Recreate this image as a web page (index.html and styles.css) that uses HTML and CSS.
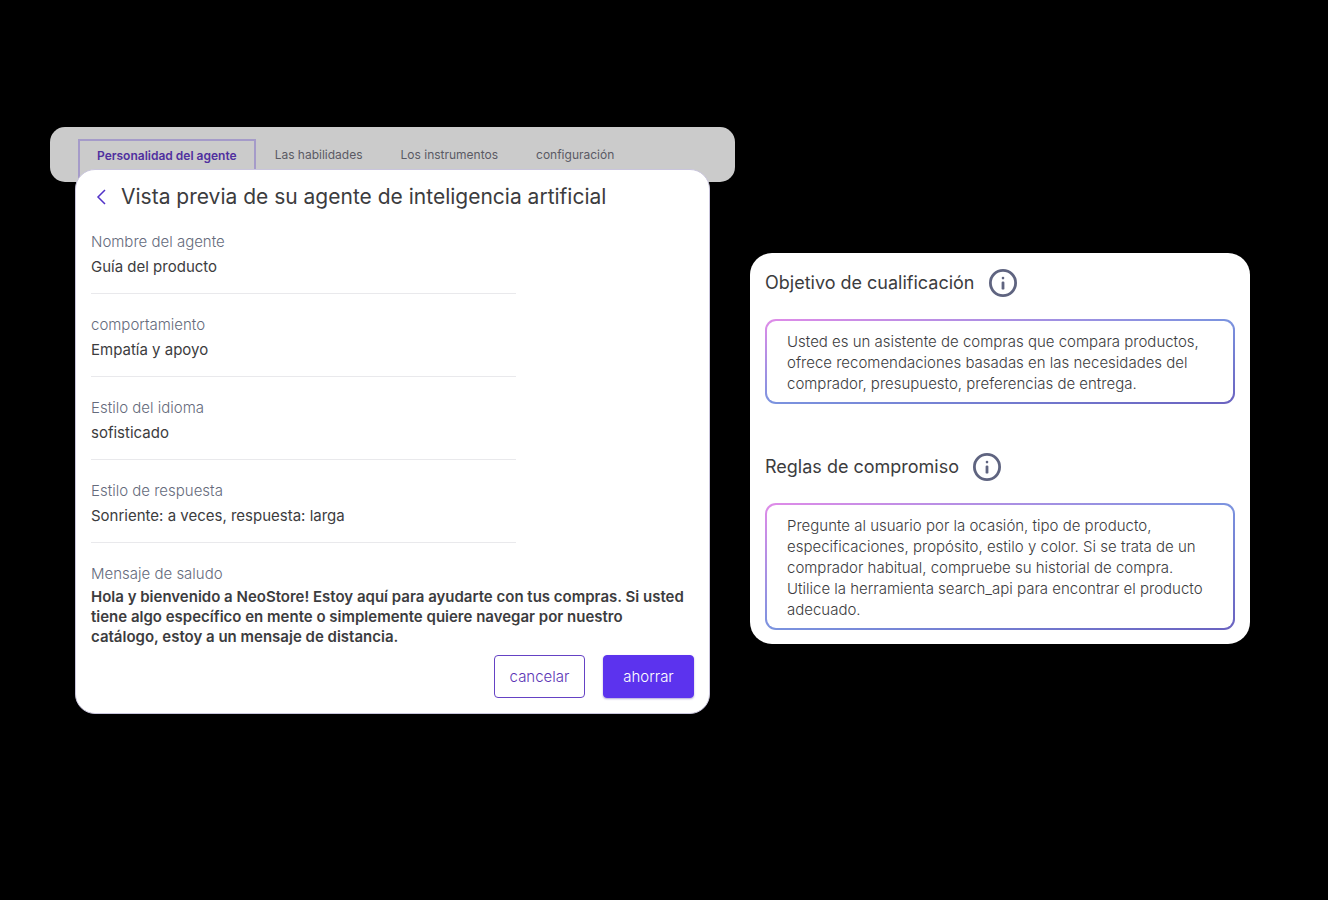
FILE: index.html
```
<!DOCTYPE html>
<html lang="es">
<head>
    <meta charset="UTF-8">
    <meta name="viewport" content="width=device-width, initial-scale=1.0">
    <title>Vista previa del agente</title>
    <link rel="stylesheet" href="styles.css">
</head>
<body>

    <main class="page">
        <section class="editor">
            <nav class="tabs">
                <a class="tab active" href="#personalidad">Personalidad del agente</a>
                <a class="tab" href="#habilidades">Las habilidades</a>
                <a class="tab" href="#instrumentos">Los instrumentos</a>
                <a class="tab" href="#configuracion">configuración</a>
            </nav>

            <div class="preview">
                <header class="preview-header">
                    <button class="back" aria-label="Volver">
                        <svg width="10" height="16" viewBox="0 0 10 16" fill="none" stroke="#5232c8" stroke-width="1.5"><path d="M9 1L2 8l7 7"/></svg>
                    </button>
                    <h1>Vista previa de su agente de inteligencia artificial</h1>
                </header>

                <dl class="fields">
                    <div class="field">
                        <dt>Nombre del agente</dt>
                        <dd>Guía del producto</dd>
                    </div>
                    <div class="field">
                        <dt>comportamiento</dt>
                        <dd>Empatía y apoyo</dd>
                    </div>
                    <div class="field">
                        <dt>Estilo del idioma</dt>
                        <dd>sofisticado</dd>
                    </div>
                    <div class="field">
                        <dt>Estilo de respuesta</dt>
                        <dd>Sonriente: a veces, respuesta: larga</dd>
                    </div>
                    <div class="greeting">
                        <dt>Mensaje de saludo</dt>
                        <dd>Hola y bienvenido a NeoStore! Estoy aquí para ayudarte con tus compras. Si usted<br>tiene algo específico en mente o simplemente quiere navegar por nuestro<br>catálogo, estoy a un mensaje de distancia.</dd>
                    </div>
                </dl>

                <div class="actions">
                    <button class="btn">cancelar</button>
                    <button class="btn primary">ahorrar</button>
                </div>
            </div>
        </section>

        <aside class="rules">
            <section>
                <div class="rule-header">
                    <h2>Objetivo de cualificación</h2>
                    <svg width="28" height="28" viewBox="0 0 28 28"><circle cx="14" cy="14" r="12.6" fill="none" stroke="#5f6480" stroke-width="2.8"/><circle cx="14" cy="9.1" r="1.3" fill="#5f6480"/><rect x="12.6" y="12.6" width="2.8" height="8" rx="1.2" fill="#5f6480"/></svg>
                </div>
                <p class="rule-text">Usted es un asistente de compras que compara productos,<br>ofrece recomendaciones basadas en las necesidades del<br>comprador, presupuesto, preferencias de entrega.</p>
            </section>
            <section>
                <div class="rule-header">
                    <h2>Reglas de compromiso</h2>
                    <svg width="28" height="28" viewBox="0 0 28 28"><circle cx="14" cy="14" r="12.6" fill="none" stroke="#5f6480" stroke-width="2.8"/><circle cx="14" cy="9.1" r="1.3" fill="#5f6480"/><rect x="12.6" y="12.6" width="2.8" height="8" rx="1.2" fill="#5f6480"/></svg>
                </div>
                <p class="rule-text">Pregunte al usuario por la ocasión, tipo de producto,<br>especificaciones, propósito, estilo y color. Si se trata de un<br>comprador habitual, compruebe su historial de compra.<br>Utilice la herramienta search_api para encontrar el producto<br>adecuado.</p>
            </section>
        </aside>
    </main>

</body>
</html>
```
FILE: styles.css
```
* { box-sizing: border-box; }
body { margin: 0; background: #000; color: #3c3c3e; font-family: Inter, "Liberation Sans", sans-serif; font-size: 15px; }
h1, h2, p, dl, dd { margin: 0; font-weight: 400; }
button { font-family: inherit; cursor: pointer; }

.page { display: grid; grid-template-columns: 685fr 500fr; gap: 15px; align-items: start; padding: 127px 78px 40px 50px; }

/* tabs, partly covered by the preview card */
.tabs { display: flex; height: 55px; padding: 12px 28px 0; background: #cbcbcb; border-radius: 15px; }
.tab { padding: 0 19px; font-size: 12px; line-height: 32px; color: #5a5a64; text-decoration: none; white-space: nowrap; }
.tab.active { padding: 0 17px; border: 2px solid #a59bc9; border-bottom: 0; line-height: 30px; font-weight: 600; color: #50309f; }

.preview { position: relative; margin: -13px 25px 0; padding: 10px 15px 15px; background: #fff; border: 1px solid #c9c5dc; border-radius: 20px; }
.preview-header { display: flex; align-items: center; gap: 15px; margin-bottom: 16px; padding-left: 5px; }
.preview-header h1 { font-size: 21px; line-height: 34px; white-space: nowrap; }
.back { display: flex; padding: 0; border: 0; background: none; }

.field { max-width: 425px; margin-bottom: 19px; padding-bottom: 14px; border-bottom: 1px solid #e9e9ec; }
.fields dt { font-weight: 300; line-height: 24px; color: #656b7c; }
.fields dd { margin-top: 1px; line-height: 24px; }
.fields .greeting dd { line-height: 20px; font-weight: 600; white-space: nowrap; }

.actions { display: flex; justify-content: flex-end; gap: 18px; margin-top: 8px; }
.btn { width: 91px; height: 43px; padding: 0; border: 1px solid #6542c4; border-radius: 4px; background: #fff; color: #5b35b5; font-size: 15px; font-weight: 300; }
.btn.primary { border-color: #5c33ee; background: #5c33ee; color: #fff; box-shadow: 0 1px 2px rgba(60, 30, 160, 0.4); }

.rules { display: grid; gap: 49px; margin-top: 126px; padding: 16px 15px 14px; background: #fff; border-radius: 22px; }
.rule-header { display: flex; align-items: center; gap: 14px; margin-bottom: 22px; }
.rule-header h2 { font-size: 18px; line-height: 28px; white-space: nowrap; }
.rule-text { padding: 10px 20px 8px; border: 2px solid transparent; border-radius: 11px; font-size: 15px; font-weight: 300; line-height: 21px; white-space: nowrap; background: linear-gradient(#fff, #fff) padding-box, linear-gradient(to bottom right, #e08be8, #7b93df 50%, #6a62c0) border-box; }
```
